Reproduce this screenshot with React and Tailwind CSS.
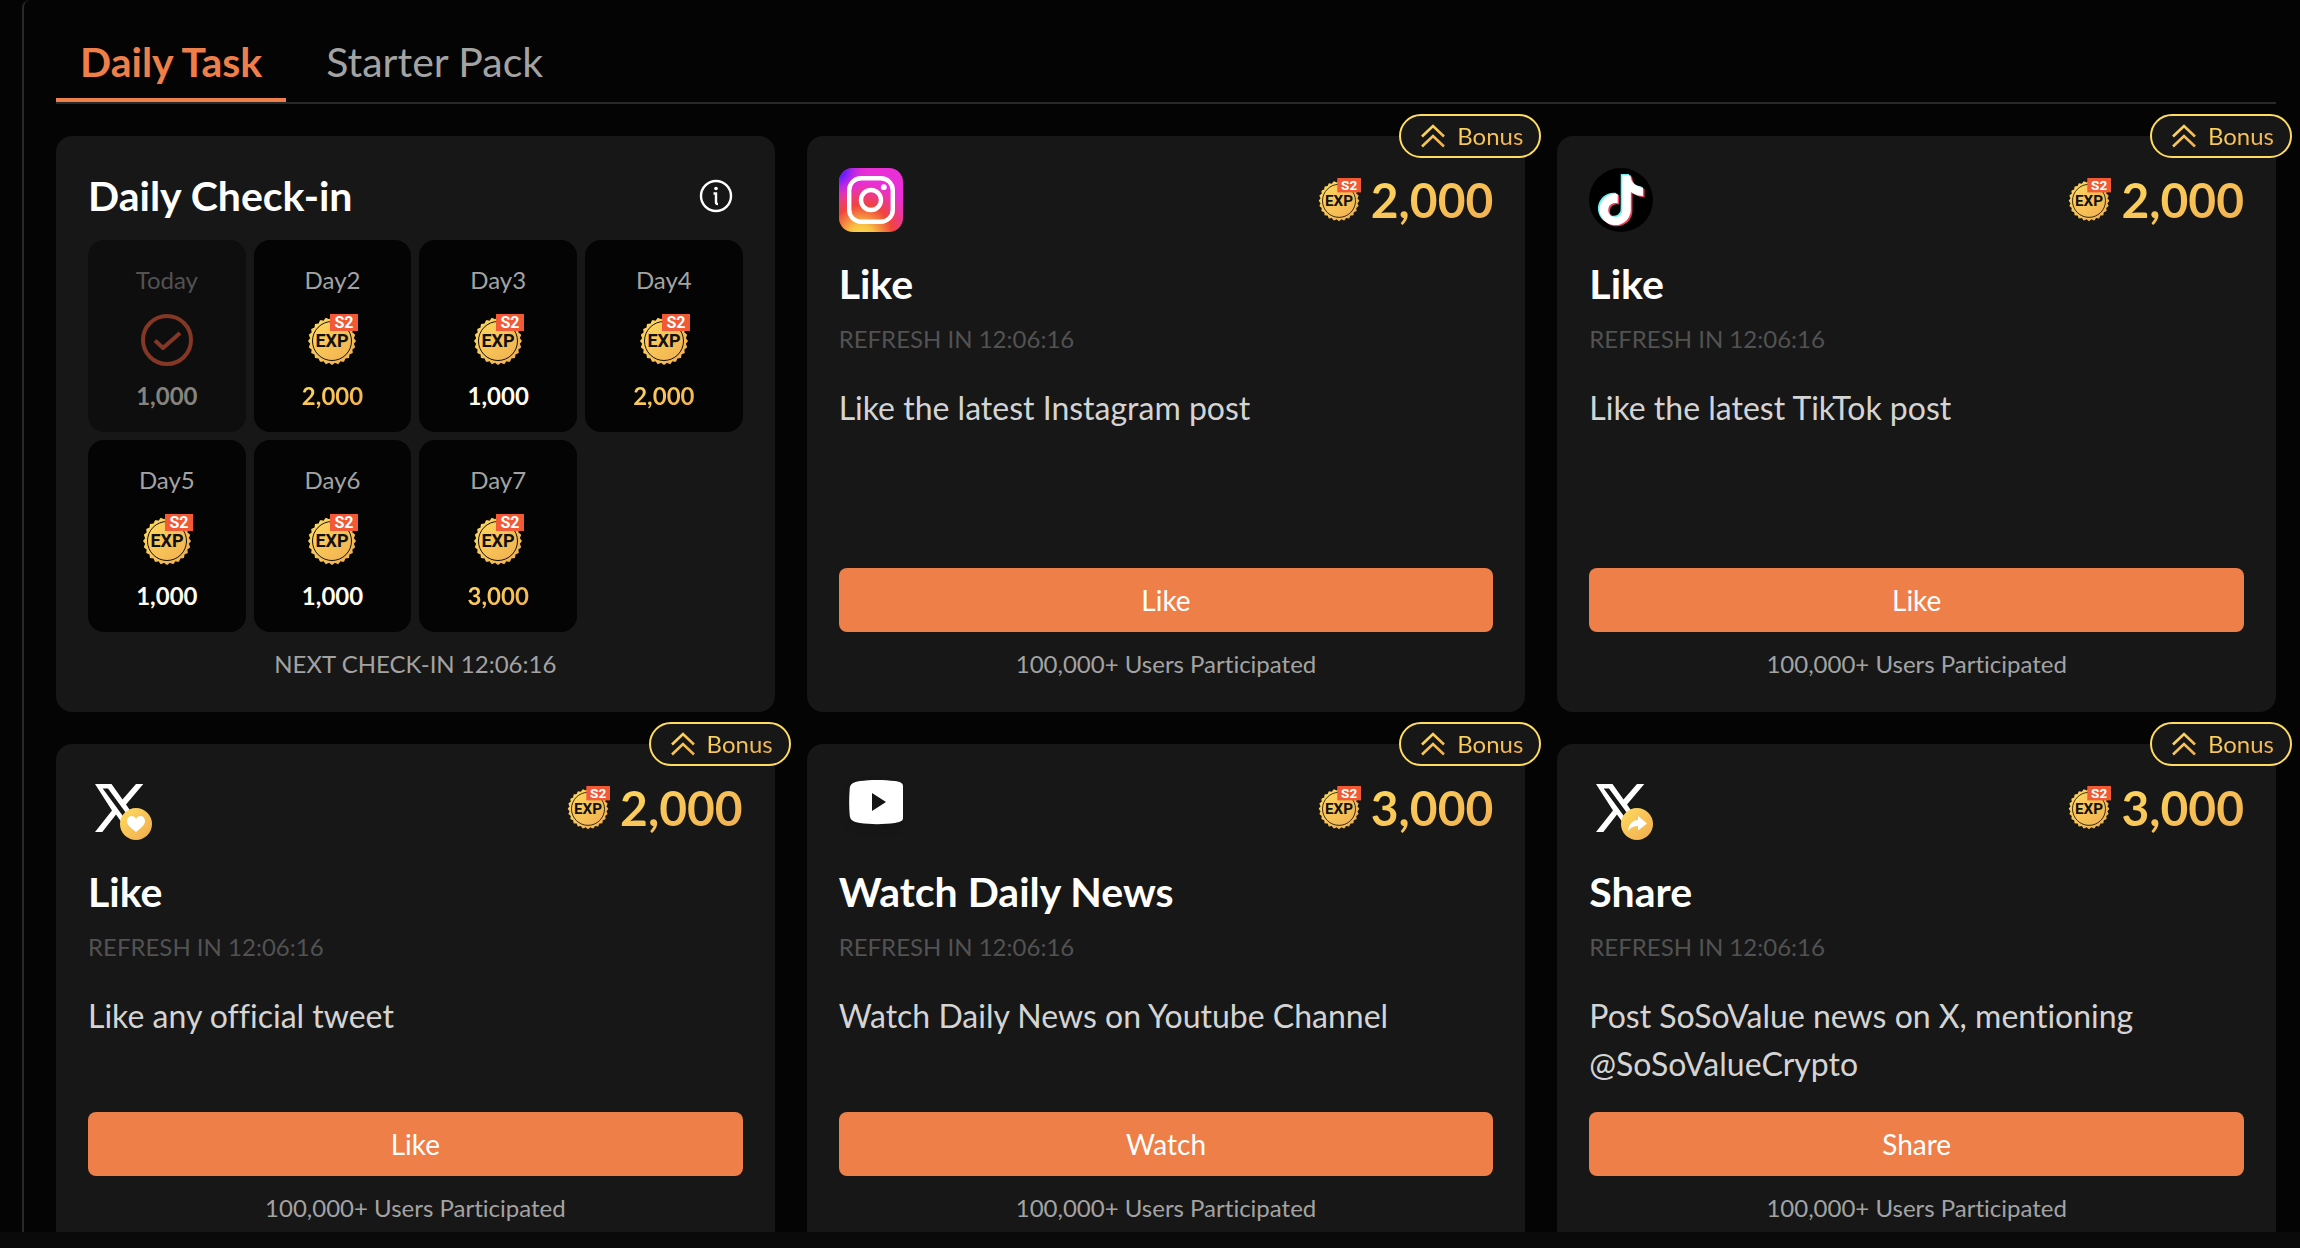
import React, { useState } from 'react';

const GOLD_TEXT = 'bg-gradient-to-br from-[#ffdc60] to-[#f0ab4f] bg-clip-text text-transparent';

const days = [
  { label: 'Today', amount: '1,000', done: true },
  { label: 'Day2', amount: '2,000', bonus: true },
  { label: 'Day3', amount: '1,000' },
  { label: 'Day4', amount: '2,000', bonus: true },
  { label: 'Day5', amount: '1,000' },
  { label: 'Day6', amount: '1,000' },
  { label: 'Day7', amount: '3,000', bonus: true },
];

const tasks = [
  { icon: InstagramIcon, title: 'Like', reward: '2,000', desc: 'Like the latest Instagram post', action: 'Like' },
  { icon: TikTokIcon, title: 'Like', reward: '2,000', desc: 'Like the latest TikTok post', action: 'Like' },
  { icon: XLikeIcon, title: 'Like', reward: '2,000', desc: 'Like any official tweet', action: 'Like' },
  { icon: YoutubeIcon, title: 'Watch Daily News', reward: '3,000', desc: 'Watch Daily News on Youtube Channel', action: 'Watch' },
  { icon: XShareIcon, title: 'Share', reward: '3,000', desc: 'Post SoSoValue news on X, mentioning @SoSoValueCrypto', action: 'Share' },
];

// Shared gradients, referenced by id from the icons below
function Gradients() {
  return (
    <svg className="absolute h-0 w-0" aria-hidden="true">
      <defs>
        <linearGradient id="gold" x1="0" y1="0" x2="1" y2="1">
          <stop offset="0" stopColor="#ffdc60" />
          <stop offset="1" stopColor="#f0ab4f" />
        </linearGradient>
        <radialGradient id="igBase" cx="0.35" cy="1.08" r="1">
          <stop offset="0" stopColor="#fd5" />
          <stop offset="0.2" stopColor="#f8c043" />
          <stop offset="0.5" stopColor="#f0443c" />
          <stop offset="0.85" stopColor="#e92fd5" />
        </radialGradient>
        <radialGradient id="igBlue" cx="-0.05" cy="0.02" r="0.5">
          <stop offset="0" stopColor="#3a1cff" />
          <stop offset="0.3" stopColor="#6a1cff" />
          <stop offset="1" stopColor="#e92fd5" stopOpacity="0" />
        </radialGradient>
      </defs>
    </svg>
  );
}

const scallop = Array.from({ length: 96 }, (_, i) => {
  const a = (i / 96) * Math.PI * 2;
  const r = 23 + Math.cos(a * 24);
  return `${(26 + r * Math.cos(a)).toFixed(2)},${(27 + r * Math.sin(a)).toFixed(2)}`;
}).join(' ');

function ExpCoin({ className }) {
  return (
    <svg viewBox="0 0 52 52" className={className} aria-hidden="true">
      <polygon points={scallop} fill="url(#gold)" />
      <circle cx="26" cy="27" r="19.500" fill="none" stroke="#111" strokeWidth="1" />
      <text x="26" y="33" textAnchor="middle" fontSize="18" fontWeight="700" fontFamily="Roboto, sans-serif" fill="#111">EXP</text>
      <rect x="24" width="28" height="17" fill="#f15a35" />
      <text x="38" y="14" textAnchor="middle" fontSize="16" fontWeight="700" fontFamily="Roboto, sans-serif" fill="#fff">S2</text>
    </svg>
  );
}

function InstagramIcon() {
  return (
    <svg viewBox="0 0 64 64" className="size-16" aria-hidden="true">
      <rect width="64" height="64" rx="14" fill="url(#igBase)" />
      <rect width="64" height="64" rx="14" fill="url(#igBlue)" />
      <rect x="10.200" y="10.200" width="43.600" height="43.600" rx="12" fill="none" stroke="#fff" strokeWidth="4.400" />
      <circle cx="32" cy="32" r="10" fill="none" stroke="#fff" strokeWidth="4.400" />
      <circle cx="44.800" cy="19.200" r="2.900" fill="#fff" />
    </svg>
  );
}

const NOTE = 'M12.525.02c1.31-.02 2.61-.01 3.91-.02.08 1.53.63 3.09 1.75 4.17 1.12 1.11 2.7 1.62 4.24 1.79v4.03c-1.44-.05-2.89-.35-4.2-.97-.57-.26-1.1-.59-1.62-.93-.01 2.92.01 5.84-.02 8.75-.08 1.4-.54 2.79-1.35 3.94-1.31 1.92-3.58 3.17-5.91 3.21-1.43.08-2.86-.31-4.08-1.03-2.02-1.19-3.44-3.37-3.65-5.71-.02-.5-.03-1-.01-1.49.18-1.9 1.12-3.72 2.58-4.96 1.66-1.44 3.98-2.13 6.15-1.72.02 1.48-.04 2.96-.04 4.44-.99-.32-2.15-.23-3.02.37-.63.41-1.11 1.04-1.36 1.75-.21.51-.15 1.07-.14 1.61.24 1.64 1.82 3.02 3.5 2.87 1.12-.01 2.19-.66 2.77-1.61.19-.33.4-.67.41-1.06.1-1.79.06-3.57.07-5.36.01-4.03-.01-8.05.02-12.07z';

function TikTokIcon() {
  return (
    <svg viewBox="0 0 64 64" className="size-16" aria-hidden="true">
      <circle cx="32" cy="32" r="32" fill="#000" />
      <path d={NOTE} transform="translate(5.7 6) scale(2.08)" fill="#6cf1f0" />
      <path d={NOTE} transform="translate(8.9 8.4) scale(2.08)" fill="#f0405f" />
      <path d={NOTE} transform="translate(7.3 7.2) scale(2.08)" fill="#fff" />
    </svg>
  );
}

function XIcon({ children }) {
  return (
    <svg viewBox="0 0 64 64" className="size-16" aria-hidden="true">
      <path d="M7 8h16.500L34.500 23.500 48 8h7.300L38 28.500 57 56H40.500L28 38.500 14.300 56H7L24 34.500zM14.700 12.500h5.300L49 52h-5.300z" fill="#fff" fillRule="evenodd" />
      <circle cx="48" cy="48" r="16" fill="url(#gold)" />
      {children}
    </svg>
  );
}

function XLikeIcon() {
  return (
    <XIcon>
      <path d="M48 56c-5-4-9-7-9-11 0-3 2-5 4.500-5 2 0 3.500 1 4.500 3 1-2 2.500-3 4.500-3 2.500 0 4.500 2 4.500 5 0 4-4 7-9 11z" fill="#fff" />
    </XIcon>
  );
}

function XShareIcon() {
  return (
    <XIcon>
      <path d="M49 40l9 7.500-9 7v-4.500c-4.500 0-7.500 1.500-10 5 .5-6 4-10.500 10-11z" fill="#fff" />
    </XIcon>
  );
}

function YoutubeIcon() {
  return (
    <svg viewBox="0 0 64 64" className="size-16" aria-hidden="true">
      <path
        d="M21 5c10-1.500 24-1.500 35 0 5 .7 8 2 8 5v32c0 3-3 4-8 5-11 1.500-25 1.500-35 0-7-1-10-3-10.300-8-.7-8-.7-18 0-26C11 8 14 6 21 5zM33 17v18l14-9z"
        fill="#fff"
        fillRule="evenodd"
        className="drop-shadow-lg"
      />
    </svg>
  );
}

function InfoIcon() {
  return (
    <svg viewBox="0 0 34 34" className="size-[34px]" fill="none" stroke="#fff" strokeWidth="2.400" aria-hidden="true">
      <circle cx="17" cy="17" r="15" />
      <path d="M14.500 14.500h2.500v9c0 1 .6 1.500 2 1.500" />
      <circle cx="17" cy="9.500" r="1.800" fill="#fff" stroke="none" />
    </svg>
  );
}

function CheckIcon() {
  return (
    <svg viewBox="0 0 52 52" className="size-13" fill="none" stroke="#853726" strokeWidth="4" aria-hidden="true">
      <circle cx="26" cy="26" r="24" />
      <path d="M14 26.500l8 7.500 17-15" strokeLinejoin="round" />
    </svg>
  );
}

function BonusBadge() {
  return (
    <div className="absolute -top-[22px] -right-4 flex h-11 items-center gap-3 rounded-full border-2 border-[#ffdc60] bg-[#171717] pr-4 pl-5">
      <svg viewBox="0 0 24 24" className="size-6" fill="none" stroke="url(#gold)" strokeWidth="2.600" aria-hidden="true">
        <path d="M1 12.500L12 2l11 10.500M1 22.500L12 12l11 10.500" />
      </svg>
      <span className={`text-2xl ${GOLD_TEXT}`}>Bonus</span>
    </div>
  );
}

function DayTile({ day }) {
  const amountColor = day.done ? 'text-[#85847f]' : 'text-[#fffdf0]';

  return (
    <li className={`flex h-48 flex-col items-center rounded-2xl pt-6 ${day.done ? 'bg-[#0e0e0e]' : 'bg-[#040404]'}`}>
      <span className={`text-2xl leading-8 ${day.done ? 'text-[#525252]' : 'text-[#a3a3a3]'}`}>{day.label}</span>
      <div className="mt-4 flex h-14 items-center">
        {day.done ? <CheckIcon /> : <ExpCoin className="size-13" />}
      </div>
      <span className={`mt-3 text-2xl leading-8 font-bold ${day.bonus ? GOLD_TEXT : amountColor}`}>{day.amount}</span>
    </li>
  );
}

function CheckInCard() {
  return (
    <section className="flex flex-col rounded-2xl bg-[#171717] p-8">
      <div className="flex h-14 items-center justify-between pr-2.5">
        <h2 className="text-[41px] leading-14 font-bold text-white">Daily Check-in</h2>
        <button aria-label="Check-in rules"><InfoIcon /></button>
      </div>
      <ul className="mt-4 grid grid-cols-4 gap-2">
        {days.map((day) => <DayTile key={day.label} day={day} />)}
      </ul>
      <p className="mt-4 text-center text-2xl leading-8 text-[#a3a3a3]">NEXT CHECK-IN 12:06:16</p>
    </section>
  );
}

function TaskCard({ task }) {
  const Icon = task.icon;

  return (
    <section className="relative flex flex-col rounded-2xl bg-[#171717] p-8">
      <BonusBadge />
      <div className="flex h-16 items-center justify-between">
        <Icon />
        <div className="flex items-center gap-2.5">
          <ExpCoin className="size-11" />
          <span className={`text-5xl leading-16 font-bold ${GOLD_TEXT}`}>{task.reward}</span>
        </div>
      </div>
      <h2 className="mt-6 text-[41px] leading-14 font-bold text-white">{task.title}</h2>
      <p className="mt-[11px] text-2xl leading-8 text-[#525252]">REFRESH IN 12:06:16</p>
      <p className="mt-[29px] min-h-24 text-[32px] leading-12 text-[#d4d4d4]">{task.desc}</p>
      <div className="mt-auto pt-6">
        <button className="h-16 w-full rounded-lg bg-[#ee7f48] text-[28px] text-white">{task.action}</button>
        <p className="mt-4 text-center text-2xl leading-8 text-[#a3a3a3]">100,000+ Users Participated</p>
      </div>
    </section>
  );
}

export default function App() {
  const [tab, setTab] = useState('Daily Task');

  return (
    <div className="flex h-screen flex-col overflow-hidden bg-[#0a0a0a] font-['Lato',sans-serif] [font-variant-ligatures:none]">
      <Gradients />
      <main className="min-h-0 flex-1 overflow-hidden bg-[#040404] pl-[22px]">
        <div className="h-full rounded-tl-lg border-l-2 border-[#292929] pt-6 pr-6 pl-8">
          <nav className="flex gap-4 border-b-2 border-[#292929]">
            {['Daily Task', 'Starter Pack'].map((name) => (
              <button
                key={name}
                onClick={() => setTab(name)}
                className={`h-[78px] border-b-4 px-6 pt-0.5 text-[41px] ${tab === name ? 'border-[#ee7f48] font-bold text-[#ee7f48]' : 'border-transparent text-[#a3a3a3]'}`}
              >
                {name}
              </button>
            ))}
          </nav>
          <div className="mt-8 grid grid-cols-3 gap-8">
            <CheckInCard />
            {tasks.map((task, idx) => <TaskCard key={idx} task={task} />)}
          </div>
        </div>
      </main>
      <footer className="h-4 shrink-0 bg-[#0a0a0a]" />
    </div>
  );
}
